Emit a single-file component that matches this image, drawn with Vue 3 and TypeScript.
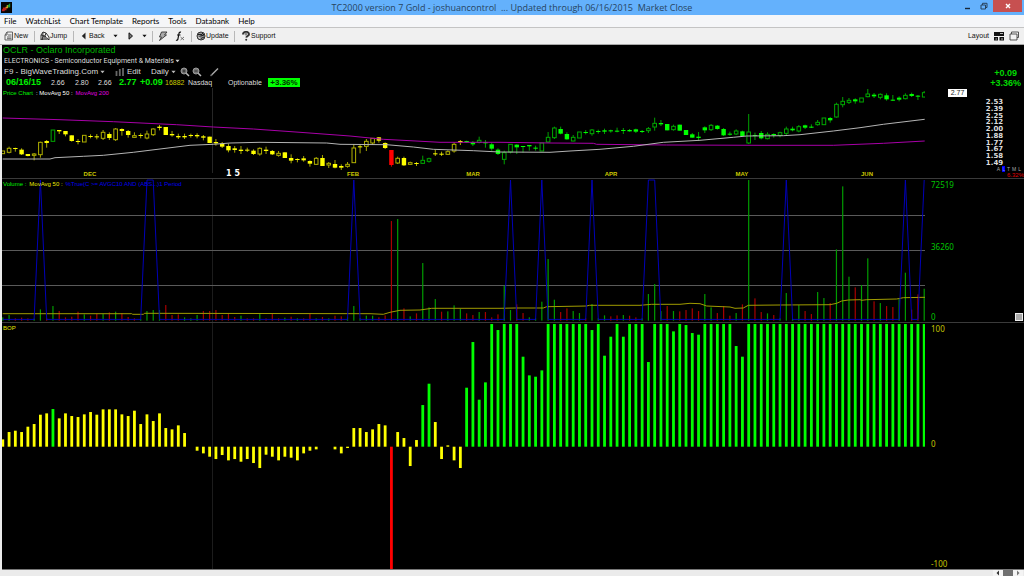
<script setup lang="ts">
type Candle = { x: number; high: number; low: number; top: number; bottom: number; hollow: boolean; tone: string }
type Bar = { x: number; y: number; h: number; tone: string }

const FIRST = 2.8
const STEP = 6.268
const barX = (i: number): number => FIRST + STEP * i

const menus: string[] = ['File', 'WatchList', 'Chart Template', 'Reports', 'Tools', 'Databank', 'Help']

// high low bodyTop bodyBottom, "h" marks an up (hollow) body; units are thirds of a pixel
const candleText = `198 206 198 206 h|185 205 190 202 h|188 200 189 192|190 210 194 208|207 214 207 213|204 226 207 211 h|170 218 172 209 h|165 188 168 174|135 169 135 169 h|135 147 135 139
138 154 138 148|151 170 151 168|162 178 168 171|151 171 151 171 h|148 160 153 155|147 163 154 157|135 165 142 160 h|142 165 147 159|129 168 132 164 h|130 152 132 138
135 158 138 150|142 158 152 157 h|145 160 150 153|137 163 147 159 h|130 153 132 149 h|120 136 125 129|126 150 126 150|138 155 147 151|146 162 153 157|146 162 153 157
146 158 150 153|145 160 150 154|150 166 154 158|155 174 155 174|162 182 171 175|171 189 176 185|176 202 183 196|183 203 190 195|183 207 194 198|188 201 194 197
193 210 197 207|187 212 190 207 h|185 207 194 198|195 210 198 208|198 215 205 211 h|202 219 202 219|208 235 219 227|220 232 222 225|213 230 220 226|226 245 228 236
216 240 220 238 h|210 243 219 243|231 249 235 240 h|225 250 237 248|238 255 243 248|231 248 238 244 h|177 233 189 233 h|178 205 184 187|162 198 169 184 h|159 180 160 174 h
156 173 157 167|172 192 174 189|195 245 195 240|215 237 220 234 h|215 243 219 241|230 240 233 238 h|231 243 234 237|212 237 226 235 h|218 233 221 229 h|195 213 205 208
200 213 206 209|196 210 200 208 h|172 203 178 198 h|165 180 168 172|167 174 168 172|168 183 172 178|155 175 166 172 h|165 188 171 175|173 197 178 191|190 210 194 207
197 238 203 223 h|177 205 178 201 h|178 207 179 187|183 203 183 186|180 197 180 184|182 197 188 191|174 198 174 198 h|141 173 157 171 h|125 162 129 158 h|125 148 132 146
142 164 147 163|150 169 157 168 h|141 159 141 159 h|135 148 141 144|132 152 135 146 h|134 146 138 141|131 147 136 140|134 143 136 139|128 142 137 140|129 147 135 138
132 140 135 139|131 144 133 140|135 144 138 141|126 144 131 137 h|98 137 115 126 h|105 123 114 118|117 136 117 136|119 137 124 134 h|119 137 119 137|135 150 135 150
144 158 148 158|141 168 155 159|124 144 127 136|117 138 121 134 h|120 134 122 132|129 153 132 151|140 152 146 149|133 150 138 147 h|137 153 139 153|87 177 141 174 h
143 165 150 153|138 163 144 160|142 163 148 161 h|145 158 147 151|140 157 143 151 h|125 150 132 145 h|125 139 131 136|120 142 125 138 h|119 132 121 128|118 129 125 128
105 122 112 119 h|99 119 99 119 h|96 113 99 106|53 98 58 96 h|36 67 49 59 h|39 57 46 52 h|40 56 43 49|39 51 39 51 h|12 37 27 35 h|24 39 29 34
25 43 28 37 h|25 47 31 43|30 48 44 47|34 49 38 44|25 43 31 41 h|23 36 27 33|30 45 32 35|18 37 23 36 h`

const toneOf = (i: number): string => {
  if (i === 62) return 'red'
  if (i === 8 || i === 67 || i === 68 || i > 73) return 'green'
  return 'yellow'
}
const candles: Candle[] = candleText.split(/[|\n]/).map((row, i) => {
  const [high, low, top, bottom, kind] = row.trim().split(' ')
  const y = (v: string): number => 85 + Number(v) / 3
  return {
    x: barX(i),
    high: y(high),
    low: y(low),
    top: y(top),
    bottom: y(bottom),
    hollow: kind === 'h',
    tone: toneOf(i),
  }
})
const bodyWidth = (c: Candle): number => (c.hollow ? 3.6 : 4.4)

const trace = (pts: number[][], base: number): string =>
  pts.map(([x, y]) => `${(x / 3).toFixed(1)},${(base + y / 3).toFixed(1)}`).join(' ')

const ma50 = trace([[8, 222], [150, 222], [165, 218], [250, 214], [310, 211], [400, 202], [480, 192], [570, 181], [640, 178], [690, 174], [780, 172], [980, 174], [1020, 178], [1160, 179], [1240, 186], [1300, 193], [1420, 197], [1500, 201], [1650, 202], [1710, 198], [1800, 193], [1900, 184], [1990, 172], [2100, 166], [2200, 157], [2240, 153], [2350, 152], [2400, 149], [2500, 138], [2580, 128], [2650, 118], [2774, 103]], 85)
const ma200 = trace([[8, 99], [180, 104], [340, 110], [530, 119], [640, 126], [760, 132], [900, 142], [1050, 153], [1150, 163], [1230, 167], [1320, 172], [1500, 172], [1650, 174], [1780, 175], [1790, 178], [2000, 180], [2280, 181], [2500, 181], [2650, 175], [2774, 168]], 85)

// bar heights in thirds of a pixel; positive closes up, negative closes down
const volumes: number[] = [
  10, 17, -7, -9, -7, 6, 34, -7, 44, -29, -10, -12, -27, 19, -15, -21, 20, -25, 27, -23,
  -11, -7, 5, 29, 32, 32, -47, -17, -19, 10, 7, 17, -29, -29, -32, -17, -23, -11, 15, -7,
  -7, 20, -7, -20, -7, 9, -12, 7, -7, -21, 7, -11, 7, -15, -13, 10, 44, 7, 15, 15,
  -10, -16, -299, 305, -37, 13, -22, 173, 40, 65, -27, 28, 46, 35, -22, -17, 26, -26, -10, -19,
  105, 32, -49, -23, 10, 7, 57, 185, 63, -26, -37, 29, 23, -7, 50, 7, 16, -13, -16, 17,
  -15, -10, 7, 80, 110, 29, -44, 29, -28, -32, -37, -29, 80, 40, -23, -44, -15, 23, -49, 422,
  -67, -26, 22, -17, 7, 83, 5, 47, -29, -20, 86, 68, -53, 214, 403, 132, -100, 107, 187, -58,
  53, -44, -41, 67, 144, -33, -79, 96,
]
const volumeBars: Bar[] = volumes.map((v, i) => {
  const h = Math.abs(v) / 3
  return { x: barX(i), y: 320.7 - h, h, tone: v > 0 ? 'up' : 'down' }
})

const volumeAverage = trace([[8, 416], [395, 416], [398, 418], [430, 418], [434, 415], [1110, 416], [1150, 418], [1170, 412], [1200, 406], [1260, 405], [1295, 400], [1500, 400], [1545, 399], [1630, 399], [1640, 395], [1760, 393], [1768, 391], [1920, 391], [1955, 388], [2040, 388], [2070, 385], [2100, 386], [2120, 393], [2190, 396], [2205, 400], [2230, 399], [2245, 391], [2340, 390], [2490, 389], [2510, 385], [2525, 378], [2545, 375], [2580, 374], [2585, 376], [2600, 374], [2690, 372], [2710, 368], [2775, 367]], 175)

const hits = new Set<number>([6, 23, 24, 56, 81, 86, 94, 103, 104, 125, 144, 147])
const signal = volumes.map((_, i) => `${barX(i).toFixed(1)},${hits.has(i) ? 180 : 319.4}`).join(' ')

const full = 368
const power: number[] = [
  22, 44, 48, 44, 60, 68, 96, 100, 113, 85, 100, 92, 89, 97, 104, 96, 112, 112, 112, 97,
  92, 108, 68, 97, 77, 100, 56, 52, 64, 41, 0, -12, -20, -30, -37, -25, -41, -37, -45, -37,
  -49, -64, -24, -30, -41, -30, -33, -41, -20, -12, -8, 0, 0, -8, -20, -4, 56, 56, 44, 52,
  68, 64, -368, 44, 26, -58, 20, 125, 189, 74, -37, 4, -41, -64, 177, 314, 141, 193, full, 350,
  full, full, full, 270, 214, 210, 229, full, full, full, full, full, full, full, 350, full, 273, 330, full, 330,
  full, full, full, 254, full, full, full, 346, full, 365, 341, 336, full, full, full, full, full, 302, 270,
  ...Array.from({ length: 29 }, () => full),
]
const powerBars: Bar[] = power.map((v, i) => {
  const h = Math.abs(v) / 3
  return { x: barX(i), y: v > 0 ? 446.7 - h : 446.7, h, tone: toneOf(i) }
})

const months = [
  { name: 'DEC', x: 90 },
  { name: '1 5', x: 233, year: true },
  { name: 'FEB', x: 353 },
  { name: 'MAR', x: 473 },
  { name: 'APR', x: 611 },
  { name: 'MAY', x: 742 },
  { name: 'JUN', x: 867 },
]
const monthLeft = (x: number): string => `${(((x - 2) / 923) * 100).toFixed(2)}%`

const prices: string[] = ['2.53', '2.39', '2.25', '2.12', '2.00', '1.88', '1.77', '1.67', '1.58', '1.49']
const scaleModes: string[] = ['A', 'L', 'T', 'M', 'L']
</script>

<template>
  <div class="window">
    <header class="titlebar">
      <svg class="logo" viewBox="0 0 12 12">
        <rect width="12" height="12" fill="#050505" />
        <path d="M1 9h2V7h2v2" stroke="#c02020" stroke-width="2" fill="none" />
        <path d="M5 6h2V4h2" stroke="#d8a020" stroke-width="1.5" fill="none" />
        <path d="M7 4l3-3v5H8z" fill="#20a030" />
      </svg>
      <h1>TC2000 version 7 Gold - joshuancontrol &nbsp;... Updated through 06/16/2015 &nbsp;Market Close</h1>
      <div class="winbuttons">
        <button aria-label="Minimize"><svg viewBox="0 0 8 8"><path d="M1 6.500h5" stroke="#16283a" stroke-width="1.400" /></svg></button>
        <button aria-label="Restore"><svg viewBox="0 0 8 8"><path d="M1 3h4.500v4H1zM2.500 3V1.300H7v4.200H5.500" fill="none" stroke="#28425c" stroke-width="1" /></svg></button>
        <button class="close" aria-label="Close"><svg viewBox="0 0 8 8"><path d="M2 2l4 4M6 2L2 6" stroke="#fff" stroke-width="1.400" /></svg></button>
      </div>
    </header>

    <nav class="menubar">
      <button v-for="m in menus" :key="m">{{ m }}</button>
    </nav>

    <div class="toolbar">
      <button class="t-new">
        <svg viewBox="0 0 10 10"><path d="M3 1h5.500v8H1V4zM3 1v3H1M4 4h3.500M3 6h4.500M3 7.700h4.500" fill="none" stroke="#555" stroke-width=".9" /></svg>New
      </button>
      <i class="sep"></i>
      <button class="t-jump">
        <svg viewBox="0 0 10 10"><path d="M1 9V4l2-3 3 1 3 4v3M1 4l4 1 4 4M3 1l-.5 8M6 2L3.500 9M4 5l-3 4" fill="none" stroke="#333" stroke-width="1" /><path d="M4 6l3 0 1 3H3z" fill="#777" /></svg>Jump
      </button>
      <i class="sep"></i>
      <button class="t-back"><svg class="play" viewBox="0 0 6 8"><path d="M4.500.5v7L.8 4z" fill="#222" /></svg>Back</button>
      <button class="t-drop" aria-label="Back history"><svg class="caret" viewBox="0 0 6 4"><path d="M.5.500h5L3 3.500z" fill="#111" /></svg></button>
      <button class="t-fwd" aria-label="Forward"><svg class="play" viewBox="0 0 6 8"><path d="M1 .8v6.400L4.500 4z" fill="#777" stroke="#111" stroke-width="1" /></svg></button>
      <button class="t-drop2" aria-label="Forward history"><svg class="caret" viewBox="0 0 6 4"><path d="M.5.500h5L3 3.500z" fill="#111" /></svg></button>
      <i class="sep"></i>
      <button class="t-scan" aria-label="Scan"><svg viewBox="0 0 10 10"><path d="M3.500 1H9L6.500 4h2L1.500 9.500 3.500 6H1.500z" fill="#aaa" stroke="#333" stroke-width=".9" /></svg></button>
      <button class="t-fx" aria-label="Formula"><svg viewBox="0 0 10 10"><path d="M6 1.200C4.200.7 4 2 3.700 4L2.800 8.500C2.500 9.500 1.700 9.400 1 9M2 4h3.500" fill="none" stroke="#111" stroke-width="1.200" /><path d="M5.500 6l3.500 3M9 6L5.500 9" stroke="#555" stroke-width=".8" /></svg></button>
      <i class="sep"></i>
      <button class="t-update"><svg viewBox="0 0 10 10"><circle cx="5" cy="5" r="4" fill="#999" stroke="#333" /><path d="M2 3.500h4L3.500 6M5 5l3-1M4 8l4-2M6 2l2 2" fill="none" stroke="#222" /><path d="M2.500 6.500l2 1" stroke="#eee" /></svg>Update</button>
      <i class="sep"></i>
      <button class="t-support"><svg viewBox="0 0 8 10"><path d="M1 3.500C1 0 7 0 7 3.200 7 5 4.500 5 4.300 6.600" fill="none" stroke="#333" stroke-width="1.900" /><circle cx="4" cy="3" r="1.500" fill="#888" /><circle cx="4.200" cy="8.700" r="1" fill="#333" /></svg>Support</button>
      <div class="right">
        <span>Layout</span>
        <button aria-label="Layout grid"><svg viewBox="0 0 10 10"><path d="M0 1h10v4H0zM0 6h4v3.500H0zM5.500 6H10v3.500H5.500z" fill="#111" /><path d="M6 2.500h3M1.500 8h1.500M7 8h2" stroke="#ddd" stroke-width=".8" /></svg></button>
        <button aria-label="Windows"><svg viewBox="0 0 10 10"><path d="M1 3h7v6H1zM2.500 3V1H9.500v5.500H8" fill="#f4f4f4" stroke="#444" stroke-width=".9" /></svg></button>
      </div>
    </div>

    <main class="workspace">
      <section class="head">
        <div class="symbol">OCLR - Oclaro Incorporated</div>
        <div class="line industry">
          <select aria-label="Industry"><option>ELECTRONICS - Semiconductor Equipment &amp; Materials</option></select>
          <svg class="caret" viewBox="0 0 6 4"><path d="M.5.500h5L3 3.500z" fill="#ccc" /></svg>
        </div>
        <div class="line tools">
          <select class="template" aria-label="Chart template"><option>F9 - BigWaveTrading.Com</option></select>
          <svg class="caret" viewBox="0 0 6 4"><path d="M.5.500h5L3 3.500z" fill="#bbb" /></svg>
          <button class="edit"><svg viewBox="0 0 10 10"><path d="M1.500 4v5M4.800 2v7M8 1v8" stroke="#666" stroke-width="1.800" /></svg>Edit</button>
          <select class="period" aria-label="Period"><option>Daily</option></select>
          <svg class="caret" viewBox="0 0 6 4"><path d="M.5.500h5L3 3.500z" fill="#bbb" /></svg>
          <button class="zoom" aria-label="Zoom in"><svg viewBox="0 0 10 10"><circle cx="4" cy="4" r="3" fill="#777" stroke="#999" /><path d="M2.500 4h3M4 2.500v3" stroke="#222" stroke-width=".8" /><path d="M6.200 6.200L9 9" stroke="#bbb" stroke-width="1.500" /></svg></button>
          <button class="zoom" aria-label="Zoom out"><svg viewBox="0 0 10 10"><circle cx="4" cy="4" r="3" fill="#777" stroke="#999" /><path d="M2.500 4h3" stroke="#222" stroke-width=".8" /><path d="M6.200 6.200L9 9" stroke="#bbb" stroke-width="1.500" /></svg></button>
          <button class="pencil" aria-label="Draw"><svg viewBox="0 0 10 10"><path d="M2 8.500L9 1.500" stroke="#aaa" stroke-width="1.400" /><path d="M1.500 9l1.500-1.500" stroke="#666" stroke-width="1.500" /></svg></button>
        </div>
        <div class="line quote">
          <b>06/16/15</b><span>2.66</span><span>2.80</span><span>2.66</span><b>2.77</b><b>+0.09</b><em>16882</em><span>Nasdaq</span><span>Optionable</span><strong>+3.36%</strong>
        </div>
        <div class="change"><span>+0.09</span><span>+3.36%</span></div>
      </section>

      <section class="panel price">
        <div class="plot">
          <svg class="canvas" viewBox="2 88 923 90" preserveAspectRatio="none">
            <path d="M212.500 88V173" stroke="#262626" />
            <g v-for="(c, i) in candles" :key="i" :class="[c.tone, { hollow: c.hollow }]">
              <path v-if="!c.hollow" class="wick" :d="`M${c.x} ${c.high}V${c.low}`" />
              <path v-else class="wick" :d="`M${c.x} ${c.high}V${c.top}M${c.x} ${c.bottom}V${c.low}`" />
              <rect class="body" :x="c.x - bodyWidth(c) / 2" :y="c.top" :width="bodyWidth(c)" :height="Math.max(c.bottom - c.top, 1)" />
            </g>
            <polyline :points="ma200" fill="none" stroke="#a800a8" />
            <polyline :points="ma50" fill="none" stroke="#b4b4b4" />
          </svg>
          <div class="legend"><span class="lime">Price Chart</span><span>: MovAvg 50 :</span><span class="magenta">MovAvg 200</span></div>
          <span v-for="m in months" :key="m.name" class="month" :class="{ year: m.year }" :style="{ left: monthLeft(m.x) }">{{ m.name }}</span>
        </div>
        <div class="axis price-axis">
          <span class="last">2.77</span>
          <ol><li v-for="p in prices" :key="p">{{ p }}</li></ol>
          <div class="modes"><span v-for="(s, i) in scaleModes" :key="i" :class="{ on: i === 1 }">{{ s }}</span></div>
          <div class="range">6.32%</div>
        </div>
      </section>

      <section class="panel volume">
        <div class="plot">
          <svg class="canvas" viewBox="2 179 923 143" preserveAspectRatio="none">
            <path d="M212.500 179V322" stroke="#1c1c1c" />
            <path d="M2 215.500H925M2 250.500H925M2 285.500H925" stroke="#5a5a5a" />
            <rect v-for="(b, i) in volumeBars" :key="i" :class="b.tone" :x="b.x - 0.6" :y="b.y" width="1.200" :height="b.h" />
            <polyline :points="volumeAverage" fill="none" stroke="#a09c00" />
            <polyline :points="signal" fill="none" stroke="#0000b8" />
          </svg>
          <div class="legend"><span class="lime">Volume :</span><span class="gold">MovAvg 50 :</span><span class="blue">%True(C &gt;= AVGC10 AND (ABS...)1 Period</span></div>
        </div>
        <div class="axis scale green-scale">
          <span>72519</span><span>36260</span><span>0</span>
          <button class="grip" aria-label="Resize panel"></button>
        </div>
      </section>

      <section class="panel bop">
        <div class="plot">
          <svg class="canvas" viewBox="2 323 923 246" preserveAspectRatio="none">
            <path d="M212.500 323V569" stroke="#1c1c1c" />
            <rect v-for="(b, i) in powerBars" :key="i" :class="b.tone" :x="b.x - 1.4" :y="b.y" width="2.800" :height="b.h" />
          </svg>
          <div class="legend"><span class="gold">BOP</span></div>
        </div>
        <div class="axis scale gold-scale"><span>100</span><span>0</span><span>-100</span></div>
      </section>
    </main>

    <footer class="scrollbar">
      <button aria-label="Scroll left"><svg viewBox="0 0 10 6"><path d="M6 .5v5L3.500 3z" fill="#333" /></svg></button>
      <span class="thumb"></span>
      <button aria-label="Scroll right"><svg viewBox="0 0 10 6"><path d="M4 .5v5L6.500 3z" fill="#777" /></svg></button>
    </footer>
  </div>
</template>

<style>
body { margin: 0; background: #000; }
</style>

<style scoped>
* { box-sizing: border-box; }
.window { display: flex; flex-direction: column; min-height: 100vh; background: #ebebeb; font-family: "Liberation Sans", Arial, sans-serif; font-size: 8px; line-height: 10px; }
button, select { appearance: none; border: 0; margin: 0; padding: 0; background: none; color: inherit; font: inherit; white-space: nowrap; }
svg { display: block; flex: none; }

.titlebar { display: flex; align-items: center; height: 15px; background: #64b1fc; padding-left: 1px; }
.logo { width: 11px; height: 11px; }
h1 { flex: 1; margin: 0; text-align: center; font: 400 9px/15px "Open Sans", "Noto Sans", sans-serif; color: #27445f; padding-left: 52px; }
.winbuttons { display: flex; align-self: flex-start; align-items: center; padding-right: 2px; }
.winbuttons button { width: 16px; height: 12px; display: grid; place-items: center; }
.winbuttons svg { width: 8px; height: 8px; }
.winbuttons .close { width: 29px; margin-left: 1px; background: #c75050; }

.menubar { display: flex; gap: 9px; height: 13px; padding-left: 4px; background: #f5f6f8; border-bottom: 1px solid #c4c4c4; font: 400 8px/12px Lato, "Noto Sans", sans-serif; color: #000; }

.toolbar { display: flex; align-items: center; height: 17px; padding-left: 4px; background: #f0f0f0; border-bottom: 1px solid #a8a8a8; font-size: 7px; color: #111; }
.toolbar button { display: flex; align-items: center; }
.toolbar svg { width: 10px; height: 10px; }
.toolbar svg.caret { width: 5px; height: 4px; }
.toolbar svg.play { width: 6px; height: 8px; }
.sep { width: 1px; height: 11px; background: #b8b8b8; }
.t-new { width: 30px; }
.t-jump { width: 33px; margin-left: 5px; }
.t-back { width: 32px; margin-left: 7px; gap: 2px; }
.t-drop { width: 15px; }
.t-fwd { width: 14px; }
.t-drop2 { width: 10px; }
.t-scan { width: 17px; margin-left: 5px; }
.t-fx { width: 16px; }
.t-update { width: 38px; margin-left: 4px; }
.t-support { margin-left: 6px; }
.toolbar .right { display: flex; align-items: center; gap: 5px; margin-left: auto; padding-right: 5px; }

.workspace { flex: 1; display: grid; grid-template-rows: 43px minmax(91px, 91fr) minmax(144px, 144fr) minmax(246px, 246fr); margin-left: 2px; background: #000; border-bottom: 1px solid #777; }
.head { position: relative; display: flex; flex-direction: column; color: #ddd; }
.head .caret { width: 5px; height: 4px; }
.symbol { height: 10px; padding-left: 1px; font-size: 9px; color: #00b400; }
.line { display: flex; align-items: center; height: 11px; padding-left: 2px; }
.industry { font-family: Roboto, "Liberation Sans", sans-serif; font-size: 7px; color: #ddd; }
.industry select { width: 171px; }
.tools select.template { width: 96px; }
.edit { display: flex; align-items: center; width: 36px; margin-left: 10px; gap: 2px; }
.edit svg, .zoom svg, .pencil svg { width: 10px; height: 10px; }
.period { width: 20px; }
.zoom { margin-left: 2px; }
.period + .caret { margin-right: 2px; }
.pencil { margin-left: 7px; }
.quote { display: grid; grid-template-columns: 45px 24px 23px 21px 21px 25px 23px 40px 40px 32px; padding-left: 4px; font-size: 7px; line-height: 9px; }
.quote b { color: #00f000; font-size: 9px; }
.quote em { font-style: normal; color: #c8c800; }
.quote strong { background: #00ff00; color: #003000; font-size: 8px; text-align: center; }
.change { position: absolute; right: 3px; bottom: 0; display: flex; flex-direction: column; align-items: center; font: 700 9px/10px "Liberation Sans", sans-serif; color: #00d800; }

.panel { display: grid; grid-template-columns: minmax(0, 1fr) 99px; min-height: 0; border-bottom: 1px solid #3a3a3a; }
.bop { border-bottom: 0; }
.plot { position: relative; min-height: 0; }
.canvas { position: absolute; inset: 0; width: 100%; height: 100%; }
.legend { position: absolute; left: 1px; top: 1px; display: flex; gap: 3px; font-size: 6px; line-height: 8px; color: #fff; white-space: nowrap; }
.lime { color: #00f000; }
.magenta { color: #e000e0; }
.gold { color: #e8e800; }
.blue { color: #0000f0; }
.month { position: absolute; bottom: 0; transform: translateX(-50%); font: 700 6px/8px "Liberation Sans", sans-serif; color: #ccc800; white-space: pre; }
.year { color: #fff; font-family: "DejaVu Sans", sans-serif; font-size: 8px; }

.yellow .wick { stroke: #a8a800; }
.yellow .body, rect.yellow { fill: #ffff00; }
.yellow.hollow .body { fill: #000; stroke: #b0b000; }
.green .wick { stroke: #00a000; }
.green .body, rect.green { fill: #00ff00; }
.green.hollow .body { fill: #000; stroke: #00a800; }
.red .wick { stroke: #e00000; }
.red .body, rect.red { fill: #ff0000; }
.up { fill: #009c00; }
.down { fill: #a80000; }

.axis { position: relative; min-height: 0; }
.price-axis { display: flex; flex-direction: column; color: #ddd; }
.last { width: 19px; margin: 1px 0 2px 23px; background: #fff; color: #222; font-size: 7px; line-height: 8px; text-align: center; }
ol { list-style: none; margin: 0 12px 0 52px; padding: 0; display: flex; flex-direction: column; justify-content: space-between; flex: 1; font: 700 7px/6px "DejaVu Sans", sans-serif; text-align: center; }
.modes { display: flex; justify-content: flex-end; gap: 2px; padding-right: 3px; font-size: 5px; line-height: 6px; color: #aaa; }
.modes .on { background: #0000ff; color: #8080ff; }
.range { text-align: right; font-size: 6px; line-height: 6px; color: #e00000; }
.scale { display: grid; align-content: stretch; padding: 1px 0 0 6px; font: 400 8px/10px "Noto Sans", sans-serif; }
.green-scale { grid-template-rows: 62fr 69fr auto; color: #00c400; }
.gold-scale { grid-template-rows: 115fr 120fr auto; color: #c4c400; }
.grip { position: absolute; right: 1px; bottom: 1px; width: 8px; height: 8px; background: #aaa; border: 1px solid #eee; }

.scrollbar { display: flex; justify-content: flex-end; height: 6px; padding-right: 1px; background: #ebebeb; }
.scrollbar button { width: 10px; height: 6px; background: #f4f4f4; }
.scrollbar svg { width: 10px; height: 6px; }
.thumb { width: 10px; background: #707070; }
</style>
